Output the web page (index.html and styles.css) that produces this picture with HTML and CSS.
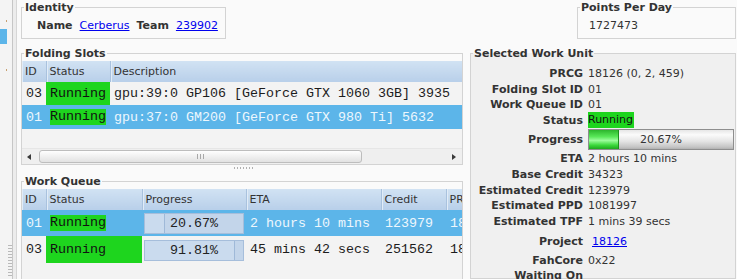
FILE: index.html
```html
<!DOCTYPE html>
<html>
<head>
  <title>FAHControl</title>
  <meta charset="utf-8">
  <link rel="stylesheet" href="styles.css">
</head>
<body>
  <div class="app">
    <div class="sidebar">
      <span class="mark"></span>
      <span class="sel"></span>
      <span class="mark mark-low"></span>
      <span class="grip"></span>
    </div>
    <div class="handle"></div>
    <div class="main">
      <div class="top">
        <fieldset class="frame identity">
          <legend>Identity</legend>
          <div class="ident-row"><b>Name</b><a href="#">Cerberus</a><b>Team</b><a href="#">239902</a></div>
        </fieldset>
        <fieldset class="frame ppd">
          <legend>Points Per Day</legend>
          <div class="ppd-value">1727473</div>
        </fieldset>
      </div>
      <div class="panes">
        <div class="left">
          <fieldset class="frame slots">
            <legend>Folding Slots</legend>
            <div class="tree">
              <table class="slots-table">
                <colgroup><col class="c-id"><col class="c-status"><col class="c-desc"></colgroup>
                <tr><th>ID</th><th>Status</th><th>Description</th></tr>
                <tr class="r1"><td>03</td><td class="run-cell">Running</td><td>gpu:39:0 GP106 [GeForce GTX 1060 3GB] 3935</td></tr>
                <tr class="r2 sel"><td>01</td><td><span class="chip">Running</span></td><td>gpu:37:0 GM200 [GeForce GTX 980 Ti] 5632</td></tr>
              </table>
            </div>
            <div class="hscroll">
              <span class="arrow-l"></span>
              <span class="thumb"><i></i></span>
              <span class="arrow-r"></span>
            </div>
          </fieldset>
          <div class="pane-grip"><span></span></div>
          <fieldset class="frame queue">
            <legend>Work Queue</legend>
            <div class="tree">
              <table class="queue-table">
                <colgroup><col class="c-id"><col class="q-status"><col class="q-progress"><col class="q-eta"><col class="q-credit"><col class="q-prcg"></colgroup>
                <tr><th>ID</th><th>Status</th><th>Progress</th><th>ETA</th><th>Credit</th><th>PRCG</th></tr>
                <tr class="r1 sel">
                  <td>01</td>
                  <td><span class="chip">Running</span></td>
                  <td class="pcell"><div class="pbar"><span class="pfill" style="width: 20.67%"></span><span class="ptext">20.67%</span></div></td>
                  <td>2 hours 10 mins</td>
                  <td>123979</td>
                  <td>18126 (0, 2, 459)</td>
                </tr>
                <tr class="r2">
                  <td>03</td>
                  <td class="run-cell">Running</td>
                  <td class="pcell"><div class="pbar"><span class="pfill" style="width: 91.81%"></span><span class="ptext">91.81%</span></div></td>
                  <td>45 mins 42 secs</td>
                  <td>251562</td>
                  <td>18126 (0, 1, 321)</td>
                </tr>
              </table>
            </div>
          </fieldset>
        </div>
        <fieldset class="frame unit">
          <legend>Selected Work Unit</legend>
          <dl class="wu-grid">
            <dt>PRCG</dt><dd>18126 (0, 2, 459)</dd>
            <dt>Folding Slot ID</dt><dd>01</dd>
            <dt>Work Queue ID</dt><dd>01</dd>
            <dt>Status</dt><dd><span class="wu-status">Running</span></dd>
            <dt>Progress</dt><dd><div class="wu-bar"><span class="wu-fill" style="width: 20.67%"></span><span class="wu-text">20.67%</span></div></dd>
            <dt>ETA</dt><dd>2 hours 10 mins</dd>
            <dt>Base Credit</dt><dd>34323</dd>
            <dt>Estimated Credit</dt><dd>123979</dd>
            <dt>Estimated PPD</dt><dd>1081997</dd>
            <dt>Estimated TPF</dt><dd>1 mins 39 secs</dd>
            <dt>Project</dt><dd class="project"><a href="#">18126</a></dd>
            <dt>FahCore</dt><dd>0x22</dd>
            <dt>Waiting On</dt><dd></dd>
          </dl>
        </fieldset>
      </div>
    </div>
  </div>
</body>
</html>
```

FILE: styles.css
```css
body { margin: 0; background: #fafafa; font: 11px "DejaVu Sans", sans-serif; color: #333; overflow: hidden; }
a { color: #0000ee; }
.app { display: flex; width: 737px; height: 279px; overflow: hidden; }

/* left strip + pane handle */
.sidebar { width: 12px; flex: none; background: #f4f4f4; border-right: 1px solid #c6c6c6; display: flex; flex-direction: column; align-items: flex-start; }
.sidebar .mark { width: 1px; height: 2px; background: #c8a070; margin: 20px 0 0 6px; }
.sidebar .mark-low { margin-top: 25px; }
.sidebar .sel { width: 7px; height: 15px; background: #5cb5e9; margin-top: 7px; }
.sidebar .grip { margin: auto 0 1px 8px; width: 4px; height: 33px;
  background: repeating-linear-gradient(#a0a0a0 0 1px, transparent 1px 3px); opacity: .7; }
.handle { width: 3px; flex: none; background: #ececec; border-right: 1px solid #d6d6d6; }

.main { flex: 1; min-width: 0; display: flex; flex-direction: column; padding: 1px 1px 0 4px; }

/* frames */
.frame { box-sizing: border-box; margin: 0; padding: 0; min-width: 0; border: 1px solid #d3d3d3; }
.frame legend { margin-left: 2px; padding: 0 1px; font-weight: bold; line-height: 13px; color: #333; }

.top { display: flex; justify-content: space-between; height: 38px; flex: none; }
.identity { width: 205px; }
.ident-row { display: flex; gap: 7px; padding: 5px 0 4px 15px; line-height: 14px; white-space: nowrap; }
.ppd { width: 159px; }
.ppd-value { padding: 5px 0 4px 11px; line-height: 14px; }

.panes { display: flex; gap: 7px; margin-top: 8px; flex: 1; min-height: 0; }
.left { width: 442px; flex: none; display: flex; flex-direction: column; }
.slots { flex: none; padding-top: 1px; }
.queue { flex: 1; padding-top: 1px; }

/* tree views */
.tree { background: #f3f3f3; overflow: hidden; }
.slots .tree { height: 87px; }
.queue .tree { height: 200px; }
table { border-collapse: collapse; table-layout: fixed; }
.slots-table { width: 620px; }
.queue-table { width: 580px; }
.c-id { width: 24px; }
.c-status { width: 64px; }
.c-desc { width: 532px; }
.q-status { width: 96px; }
.q-progress { width: 104px; }
.q-eta { width: 135px; }
.q-credit { width: 65px; }
.q-prcg { width: 156px; }
th { height: 21px; padding: 0 3px; text-align: left; font-weight: normal; color: #333; white-space: nowrap; overflow: hidden;
  background: linear-gradient(#d1e2f3, #b8cfe9); border-right: 1px solid #a9c2de; box-shadow: inset 1px 0 #e1ecf7; }
td { padding: 0 4px; font: 13.33px "Liberation Mono", monospace; color: #1c1c1c; white-space: nowrap; overflow: hidden; }
.slots-table .r1 td { height: 23px; }
.slots-table .r2 td { height: 24px; }
.queue-table .r1 td { height: 23px; }
.queue-table .r2 td { height: 24px; }
tr.sel td { background: #5cb5e9; color: #eef7fd; }
td.run-cell { background: #1ed51e; color: #111; }
.chip { display: inline-block; line-height: 16px; background: #1ed51e; color: #111; }

/* progress in queue */
td.pcell { padding: 2px 2px 1px; }
.pbar { display: grid; height: 19px; border: 1px solid #a6bedb; background: #c3d5ea; }
.pbar > span { grid-area: 1 / 1; }
.pfill { box-sizing: border-box; height: 100%; background: #cadbee; border-right: 1px solid #9fb9d8; }
.ptext { text-align: center; line-height: 19px; color: #222; }

/* horizontal scrollbar */
.hscroll { height: 16px; display: flex; align-items: center; padding: 0 6px 0 5px; background: #efefef; border-top: 1px solid #e6e6e6; box-sizing: border-box; }
.arrow-l { width: 0; height: 0; border-right: 4px solid #3a3a3a; border-top: 3px solid transparent; border-bottom: 3px solid transparent; }
.arrow-r { margin-left: auto; width: 0; height: 0; border-left: 4px solid #3a3a3a; border-top: 3px solid transparent; border-bottom: 3px solid transparent; }
.thumb { margin-left: 8px; width: 323px; height: 13px; box-sizing: border-box; border: 1px solid #bdbdbd; border-radius: 3px;
  background: linear-gradient(#fefefe, #e2e2e2); display: flex; justify-content: center; align-items: center; }
.thumb i { width: 7px; height: 5px; background: repeating-linear-gradient(90deg, #a8a8a8 0 1px, transparent 1px 3px); }

.pane-grip { height: 10px; flex: none; display: flex; justify-content: center; padding-left: 4px; }
.pane-grip span { width: 20px; height: 2px; margin-top: 2px; background: repeating-linear-gradient(90deg, #b0b0b0 0 1px, transparent 1px 3px); }

/* selected work unit */
.unit { flex: 1; background: #f0f0f0; padding-top: 5px; }
.wu-grid { margin: 0; display: grid; grid-template-columns: 112px 1fr; column-gap: 5px; align-items: center;
  grid-template-rows: 16px 16px 15px 16px 22px 16px 16px 16px 15px 16px 24px 14px 16px; }
.wu-grid dt { font-weight: bold; text-align: right; white-space: nowrap; }
.wu-grid dd { margin: 0; white-space: nowrap; }
.wu-status { display: inline-block; line-height: 16px; background: #1ed51e; color: #111; padding-right: 1px; }
.wu-bar { display: grid; height: 21px; box-sizing: border-box; margin-right: 1px; border: 1px solid #8e8e8e;
  background: linear-gradient(#e6e6e6, #fbfbfb 25%, #e4e4e4 60%, #c4c4c4 90%, #b0b0b0); }
.wu-bar > span { grid-area: 1 / 1; }
.wu-fill { height: 100%; box-sizing: border-box; border-right: 1px solid #1d8f1d;
  background: linear-gradient(#2cb52c, #58e858 35%, #9cfc9c 55%, #3ad83a 80%, #1fa71f); }
.wu-text { text-align: center; line-height: 19px; color: #333; }
.project a { margin-left: 4px; }
```
